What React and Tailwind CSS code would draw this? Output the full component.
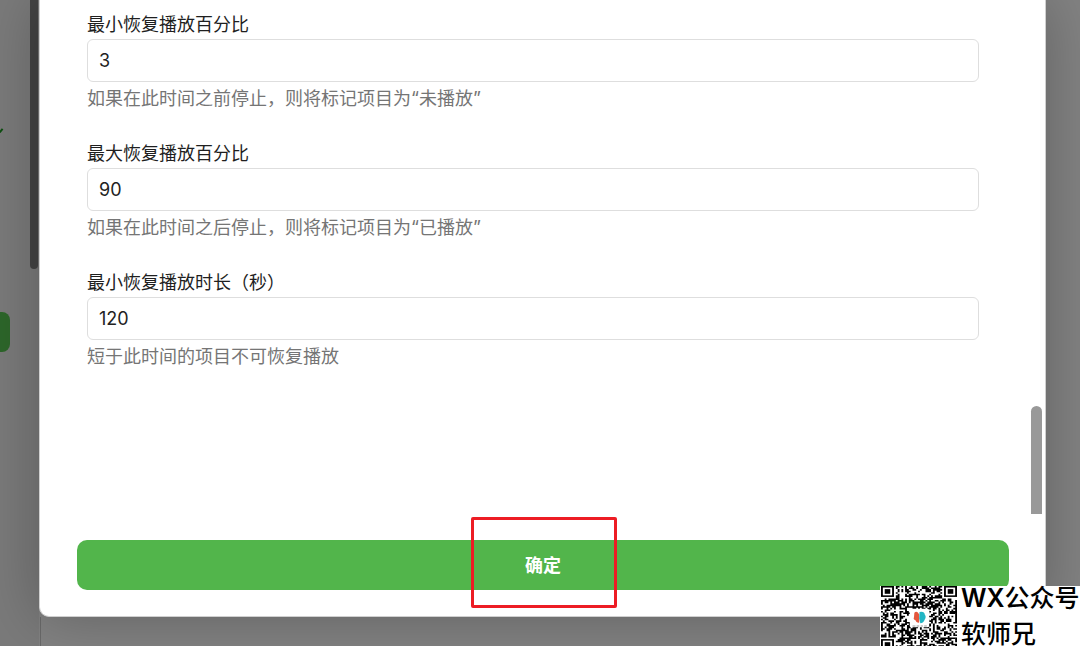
import React, { useState } from "react";

const FIELDS = [
  {
    id: "minResumePct",
    label: "最小恢复播放百分比",
    value: "3",
    hint: "如果在此时间之前停止，则将标记项目为“未播放”",
  },
  {
    id: "maxResumePct",
    label: "最大恢复播放百分比",
    value: "90",
    hint: "如果在此时间之后停止，则将标记项目为“已播放”",
  },
  {
    id: "minResumeDuration",
    label: "最小恢复播放时长（秒）",
    value: "120",
    hint: "短于此时间的项目不可恢复播放",
  },
];

const QR_SIZE = 41;

// builds one path with a 1x1 square for every dark module
const buildQrPath = () => {
  let seed = 20;
  let d = "";
  for (let y = 0; y < QR_SIZE; y++) {
    for (let x = 0; x < QR_SIZE; x++) {
      seed = (seed * 1103515245 + 12345) % 2147483648;
      const inFinder =
        (x < 8 && y < 8) ||
        (x > QR_SIZE - 9 && y < 8) ||
        (x < 8 && y > QR_SIZE - 9);
      if (!inFinder && seed / 2147483648 < 0.54) {
        d += `M${x} ${y}h1v1h-1z`;
      }
    }
  }
  return d;
};

const QR_PATH = buildQrPath();

const Finder = ({ x, y }) => (
  <g>
    <rect x={x + 0.5} y={y + 0.5} width="6" height="6" fill="none" stroke="#000" />
    <rect x={x + 2} y={y + 2} width="3" height="3" />
  </g>
);

const QrCode = () => (
  <svg
    viewBox="0 0 41 41"
    preserveAspectRatio="none"
    className="w-[76px] h-[64px] shrink-0"
  >
    <path d={QR_PATH} />
    <Finder x={0} y={0} />
    <Finder x={34} y={0} />
    <Finder x={0} y={34} />
    <rect x="15.5" y="14.5" width="10.5" height="12" rx="1" fill="#fff" />
    <path
      d="M18 17.2q1-1.4 2 0l.6 1v5.2q-1.6.4-2-1.4-1.4-.6-.8-2z"
      fill="#e4573d"
    />
    <path
      d="M20.8 16.6q2.6-.6 2.8 1.6 1 1.4 0 3.2-.6 2.2-2.4 2.4l-.6-3z"
      fill="#22b5c4"
    />
    <path d="M17 25.6h1.6m.6 0h1.4m.8 0h1.2m.7 0h1.4" stroke="#999" strokeWidth=".7" />
  </svg>
);

const Field = ({ id, label, value, hint, onChange }) => (
  <div>
    <label htmlFor={id} className="block leading-7 text-[#1f1f1f]">
      {label}
    </label>
    <input
      id={id}
      type="text"
      value={value}
      onChange={(e) => onChange(id, e.target.value)}
      className="block w-full h-[43px] px-[11px] border border-[#dedede] rounded-md bg-white text-[#222] outline-none"
    />
    <p className="leading-[34px] text-[#757575]">{hint}</p>
  </div>
);

const App = () => {
  const [values, setValues] = useState(
    Object.fromEntries(FIELDS.map((f) => [f.id, f.value]))
  );

  const handleChange = (id, value) => setValues({ ...values, [id]: value });

  return (
    <div className="relative flex h-screen overflow-hidden bg-[#828282] text-[18px] font-[Inter,'Noto_Sans_CJK_SC',sans-serif]">
      {/* dimmed page behind the dialog */}
      <aside className="flex justify-between w-[39px] shrink-0 pr-px bg-[#7a7a7a]">
        <div className="w-[10px] pt-[127px]">
          <svg viewBox="0 0 10 7" className="block w-[10px] h-[7px]">
            <path d="M-1 5.5L0 5L2.6 1.8" stroke="#0d4f10" strokeWidth="2" fill="none" />
          </svg>
          <div className="mt-[178px] h-10 rounded-r-lg bg-[#2d662a]" />
        </div>
        <div className="w-2 h-[269px] rounded-b-full bg-[#444]" />
      </aside>

      <div className="flex flex-col flex-1 min-w-0">
        <div
          role="dialog"
          className="relative z-10 flex flex-col flex-1 min-h-0 rounded-b-[10px] border border-t-0 border-[#d0d0d0] bg-white shadow-[0_0_60px_rgba(0,0,0,0.26)]"
        >
          <div className="flex flex-1 min-h-0 pr-[3px]">
            <form className="flex flex-col flex-1 gap-6 pt-[11px] pl-[47px] pr-[52px]">
              {FIELDS.map((f) => (
                <Field
                  key={f.id}
                  {...f}
                  value={values[f.id]}
                  onChange={handleChange}
                />
              ))}
            </form>
            <div className="self-end w-[11px] h-[108px] rounded-t-full bg-[#999]" />
          </div>
          <div className="py-[26px] pl-[37px] pr-[36px]">
            <button
              type="button"
              className="relative flex items-center justify-center w-full h-[50px] rounded-[10px] bg-[#52b54b] text-white font-bold"
            >
              确定
              <span className="absolute left-1/2 -top-[23px] -translate-x-1/2 w-[146px] h-[91px] ml-px border-3 border-[#ed1c24] rounded-xs" />
            </button>
          </div>
        </div>
        <div className="h-[29px] shrink-0 ml-px border-l border-[#696969]" />
      </div>

      <div className="w-[34px] shrink-0" />

      <div className="absolute right-0 bottom-0 z-20 flex items-start gap-1 w-[200px] h-[60px] pl-px bg-white text-black">
        <QrCode />
        <div className="flex flex-col gap-3 text-[25px] leading-6 font-medium whitespace-nowrap">
          <p>
            <span className="font-semibold">WX</span>公众号
          </p>
          <p>软师兄</p>
        </div>
      </div>
    </div>
  );
};

export default App;
